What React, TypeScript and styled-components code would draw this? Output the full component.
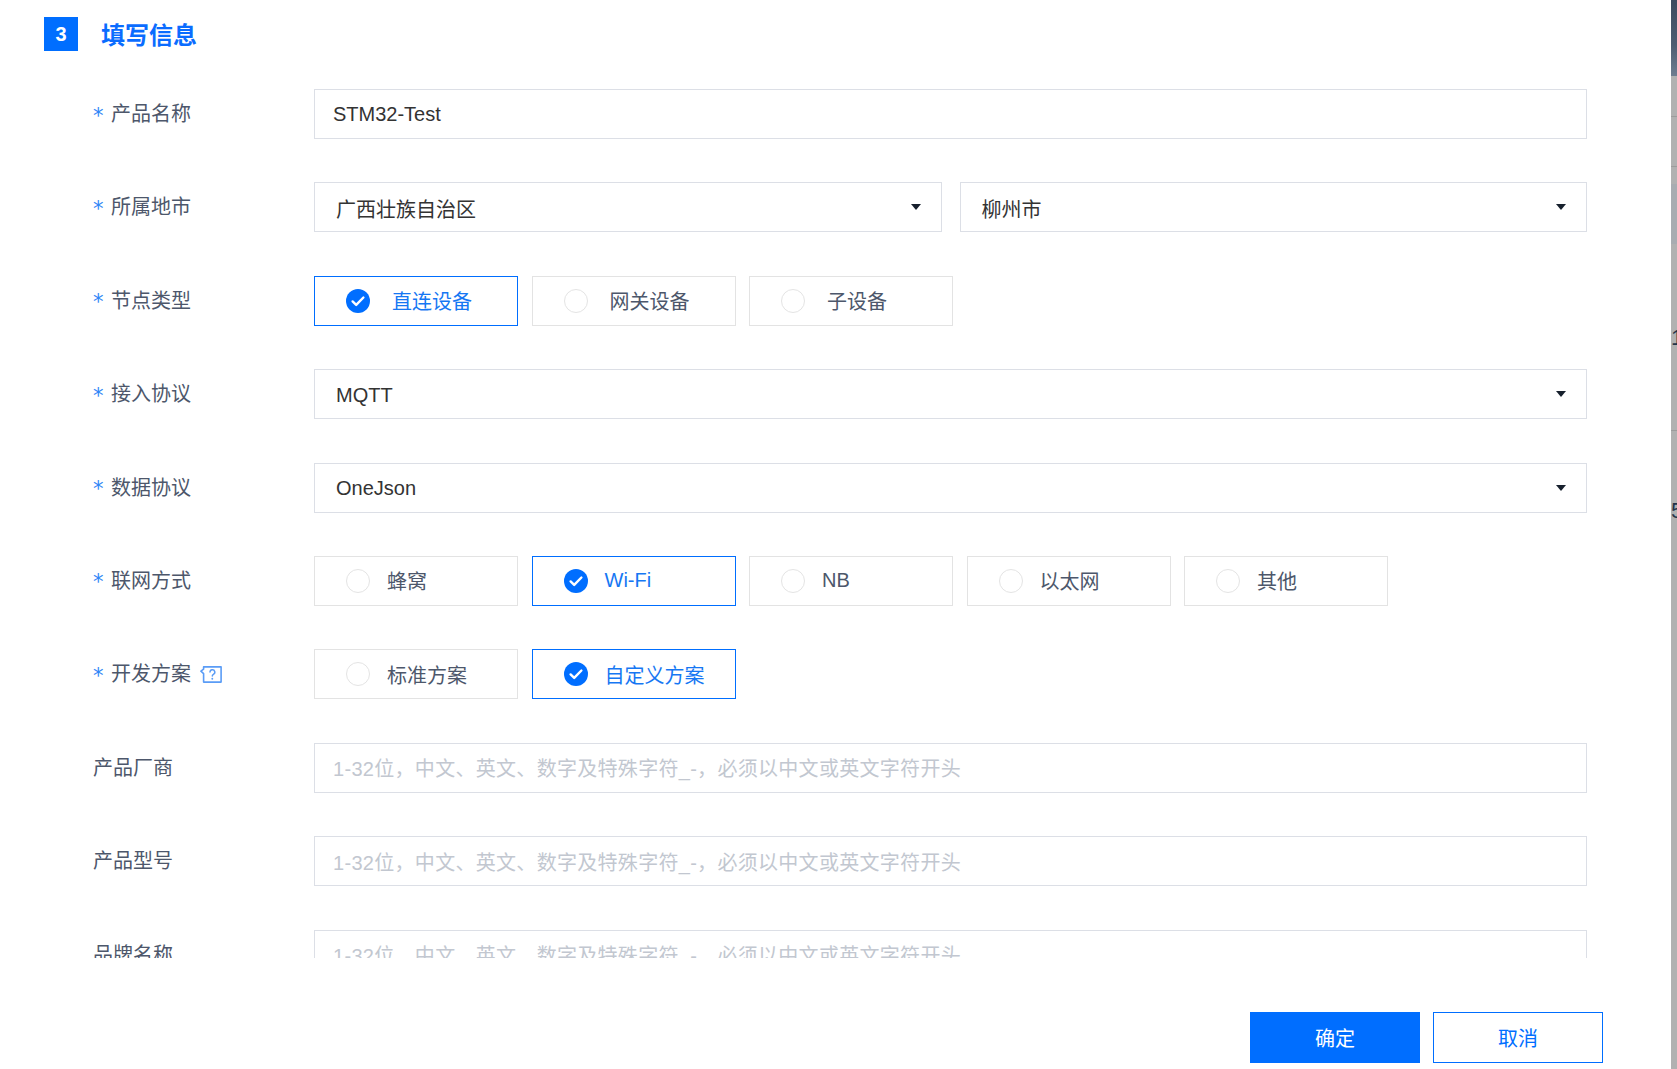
import React from "react";
import styled, { createGlobalStyle } from "styled-components";

const GlobalStyle = createGlobalStyle`
  html, body { margin: 0; padding: 0; background: #ffffff; }
  body { font-family: "Liberation Sans", "Noto Sans CJK SC", sans-serif; }
  * { box-sizing: border-box; }
`;

const BLUE = "#006eff";
const BORDER = "#dcdfe6";

const Page = styled.div`
  display: flex;
  width: 1677px;
  height: 1069px;
  overflow: hidden;
  background: #fff;
`;

const Panel = styled.div`
  flex: 1;
  display: flex;
  flex-direction: column;
  background: #fff;
  min-width: 0;
`;

const ScrollArea = styled.div`
  height: 958px;
  overflow: hidden;
  padding: 17px 0 0 44px;
`;

const Header = styled.div`
  display: flex;
  align-items: center;
  gap: 23px;
  height: 34px;
  margin-bottom: 38px;
`;

const StepBadge = styled.div`
  width: 34px;
  height: 34px;
  background: ${BLUE};
  color: #fff;
  font-family: "Liberation Sans", sans-serif;
  font-weight: 700;
  font-size: 20px;
  display: flex;
  align-items: center;
  justify-content: center;
`;

const Title = styled.h2`
  margin: 0;
  font-size: 24px;
  font-weight: 700;
  color: #0a6cff;
  font-family: "Noto Sans CJK SC", sans-serif;
  line-height: 34px;
`;

const Form = styled.div`
  margin-left: 49px;
  display: flex;
  flex-direction: column;
  gap: 43.4px;
`;

const Row = styled.div`
  display: grid;
  grid-template-columns: 221px 1273px;
  align-items: center;
  height: 50px;
`;

const Label = styled.div`
  display: flex;
  align-items: center;
  font-size: 20px;
  color: #4d576b;
  font-family: "Noto Sans CJK SC", sans-serif;
  margin-top: -3px;
`;

const Star = styled.span`
  display: inline-block;
  width: 18px;
  color: #2f86f6;
  font-family: "DejaVu Sans", sans-serif;
  font-size: 21px;
  position: relative;
  top: 3px;
`;

const HelpIcon = styled.svg`
  margin-left: 9px;
  width: 22px;
  height: 17px;
  position: relative;
  top: 2px;
`;

const TextInput = styled.div<{ $placeholder?: boolean }>`
  height: 50px;
  border: 1px solid ${BORDER};
  display: flex;
  align-items: center;
  padding-left: 18px;
  font-size: 20px;
  letter-spacing: ${(p) => (p.$placeholder ? "0.3px" : "0")};
  color: ${(p) => (p.$placeholder ? "#c2c7d0" : "#333")};
  font-family: "Liberation Sans", "Noto Sans CJK SC", sans-serif;
  white-space: nowrap;
  overflow: hidden;
`;

const SelectRow = styled.div`
  display: flex;
  gap: 18px;
`;

const SelectBox = styled.div`
  flex: 1;
  height: 50px;
  border: 1px solid ${BORDER};
  display: flex;
  align-items: center;
  justify-content: space-between;
  padding: 2px 20px 0 21px;
  font-size: 20px;
  color: #333;
  font-family: "Liberation Sans", "Noto Sans CJK SC", sans-serif;
`;

const Caret = styled.span`
  width: 0;
  height: 0;
  margin-top: -2px;
  border-left: 5px solid transparent;
  border-right: 5px solid transparent;
  border-top: 6px solid #17202d;
`;

const RadioGroup = styled.div`
  display: flex;
  gap: 13.5px;
`;

const RadioBox = styled.div<{ $checked?: boolean; $gap: number }>`
  width: 204px;
  height: 50px;
  border: 1px solid ${(p) => (p.$checked ? BLUE : "#e3e3e3")};
  display: flex;
  align-items: center;
  gap: ${(p) => p.$gap}px;
  padding-left: 31px;
  font-size: 20px;
  color: ${(p) => (p.$checked ? "#1677f3" : "#4d576b")};
  font-family: "Liberation Sans", "Noto Sans CJK SC", sans-serif;
  background: #fff;
`;

const Circle = styled.span`
  width: 24px;
  height: 24px;
  border-radius: 50%;
  border: 1px solid #e4e4e4;
  flex: none;
`;

const Footer = styled.div`
  display: flex;
  justify-content: flex-end;
  gap: 13px;
  padding: 54px 68px 0 0;
`;

const Button = styled.button<{ $primary?: boolean }>`
  width: 170px;
  height: 51px;
  font-size: 20px;
  font-family: "Noto Sans CJK SC", sans-serif;
  border: 1px solid ${BLUE};
  background: ${(p) => (p.$primary ? BLUE : "#fff")};
  color: ${(p) => (p.$primary ? "#fff" : BLUE)};
  cursor: pointer;
  padding: 0;
`;

const BgStrip = styled.div`
  width: 6px;
  flex: none;
  background: #b1b1b1;
  display: flex;
  flex-direction: column;
  overflow: hidden;
`;

const StripSeg = styled.div<{ $h: number; $bg?: string; $line?: boolean }>`
  height: ${(p) => p.$h}px;
  flex: none;
  background: ${(p) => p.$bg || "#b1b1b1"};
  border-bottom: ${(p) => (p.$line ? "1px solid #9c9c9c" : "none")};
  position: relative;
`;

const StripTop = styled.div`
  height: 76px;
  flex: none;
  background: linear-gradient(180deg, #3c4b5f 0%, #4d5d72 60%, #6e7d90 100%);
`;

const StripDigit = styled.span<{ $top: number }>`
  position: absolute;
  left: 0;
  top: ${(p) => p.$top}px;
  font-size: 22px;
  line-height: 24px;
  color: #25344a;
  font-family: "Liberation Sans", sans-serif;
`;

const CheckCircle = () => (
  <svg width="24" height="24" viewBox="0 0 24 24" style={{ flex: "none" }}>
    <circle cx="12" cy="12" r="12" fill={BLUE} />
    <path d="M6.6 12.4l3.6 3.5 7.2-7.4" fill="none" stroke="#fff" strokeWidth="2.4" strokeLinecap="round" strokeLinejoin="round" />
  </svg>
);

type Opt = { label: string; checked?: boolean };

const Radios = ({ options, gap }: { options: Opt[]; gap: number }) => (
  <RadioGroup>
    {options.map((o) => (
      <RadioBox key={o.label} $checked={o.checked} $gap={gap}>
        {o.checked ? <CheckCircle /> : <Circle />}
        <span>{o.label}</span>
      </RadioBox>
    ))}
  </RadioGroup>
);

const Req = ({ children }: { children: React.ReactNode }) => (
  <Label>
    <Star>*</Star>
    {children}
  </Label>
);

const PH = "1-32位，中文、英文、数字及特殊字符_-，必须以中文或英文字符开头";

export default function App() {
  return (
    <>
      <GlobalStyle />
      <Page>
        <Panel>
          <ScrollArea>
            <Header>
              <StepBadge>3</StepBadge>
              <Title>填写信息</Title>
            </Header>
            <Form>
              <Row>
                <Req>产品名称</Req>
                <TextInput>STM32-Test</TextInput>
              </Row>
              <Row>
                <Req>所属地市</Req>
                <SelectRow>
                  <SelectBox>
                    <span>广西壮族自治区</span>
                    <Caret />
                  </SelectBox>
                  <SelectBox>
                    <span>柳州市</span>
                    <Caret />
                  </SelectBox>
                </SelectRow>
              </Row>
              <Row>
                <Req>节点类型</Req>
                <Radios
                  gap={22}
                  options={[{ label: "直连设备", checked: true }, { label: "网关设备" }, { label: "子设备" }]}
                />
              </Row>
              <Row>
                <Req>接入协议</Req>
                <SelectBox>
                  <span>MQTT</span>
                  <Caret />
                </SelectBox>
              </Row>
              <Row>
                <Req>数据协议</Req>
                <SelectBox>
                  <span>OneJson</span>
                  <Caret />
                </SelectBox>
              </Row>
              <Row>
                <Req>联网方式</Req>
                <Radios
                  gap={17}
                  options={[
                    { label: "蜂窝" },
                    { label: "Wi-Fi", checked: true },
                    { label: "NB" },
                    { label: "以太网" },
                    { label: "其他" },
                  ]}
                />
              </Row>
              <Row>
                <Req>
                  开发方案
                  <HelpIcon viewBox="0 0 22 17">
                    <path d="M3.6 0.9H21.1V16.1H3.6V7.6L0.9 5.2L3.6 3.2Z" fill="none" stroke="#5a9cf6" strokeWidth="1.6" strokeLinejoin="round" />
                    <path d="M10 6.1a2.4 2.4 0 1 1 3.4 2.2c-.8.4-1.1.9-1.1 1.8" fill="none" stroke="#5a9cf6" strokeWidth="1.5" strokeLinecap="round" />
                    <circle cx="12.3" cy="12.7" r="0.95" fill="#5a9cf6" />
                  </HelpIcon>
                </Req>
                <Radios gap={17} options={[{ label: "标准方案" }, { label: "自定义方案", checked: true }]} />
              </Row>
              <Row>
                <Label>产品厂商</Label>
                <TextInput $placeholder>{PH}</TextInput>
              </Row>
              <Row>
                <Label>产品型号</Label>
                <TextInput $placeholder>{PH}</TextInput>
              </Row>
              <Row>
                <Label>品牌名称</Label>
                <TextInput $placeholder>{PH}</TextInput>
              </Row>
            </Form>
          </ScrollArea>
          <Footer>
            <Button $primary>确定</Button>
            <Button>取消</Button>
          </Footer>
        </Panel>
        <BgStrip>
          <StripTop />
          <StripSeg $h={41} $line />
          <StripSeg $h={50} $line />
          <StripSeg $h={17} />
          <StripSeg $h={60} $bg="#a8acb1" />
          <StripSeg $h={187} $line>
            <StripDigit $top={82}>1</StripDigit>
          </StripSeg>
          <StripSeg $h={300}>
            <StripDigit $top={68}>5</StripDigit>
          </StripSeg>
        </BgStrip>
      </Page>
    </>
  );
}
